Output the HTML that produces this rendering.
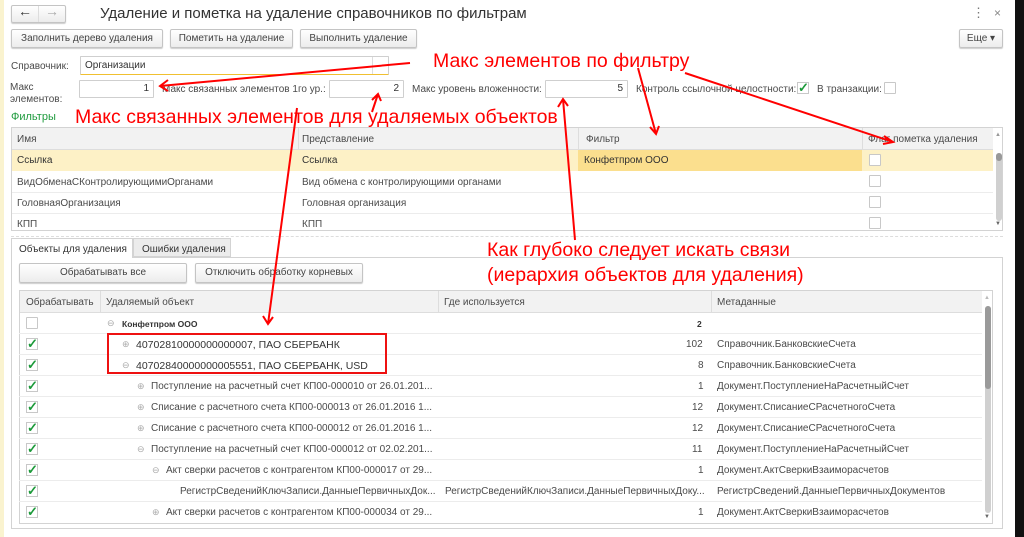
<!DOCTYPE html>
<html><head><meta charset="utf-8"><style>
*{box-sizing:border-box;margin:0;padding:0}
body{width:1024px;height:537px;position:relative;overflow:hidden;background:#fff;font-family:"Liberation Sans",Arial,sans-serif;font-size:10px;color:#4a4a4a}
.a{position:absolute;white-space:nowrap}
.btn{position:absolute;border:1px solid #c4c4c4;border-radius:2px;background:linear-gradient(#fff,#ececec);box-shadow:0 1px 1px rgba(0,0,0,.2);text-align:center;color:#444;font-size:10px}
.inp{position:absolute;border:1px solid #cfcfcf;background:#fff;border-radius:1px;text-align:right;padding-right:4px;color:#333}
.cb{position:absolute;width:12px;height:12px;border:1px solid #c8c8c8;background:#fff;border-radius:1px}
.chk{position:absolute;width:12px;height:12px;border:1px solid #c8c8c8;background:#fff;color:#1c9a3a;font-size:13px;font-weight:bold;line-height:10px;text-align:center;overflow:visible}
.red{position:absolute;color:#ff0000;font-size:19.5px;white-space:nowrap;font-family:"Liberation Sans",sans-serif}
.tr{position:absolute;left:19px;width:963px;height:21px;border-bottom:1px solid #ececec}
.tr span{position:absolute;top:5px;white-space:nowrap}
.tr .chk{top:4px;left:7px}
.pm{color:#aaa;font-size:9px}
</style></head><body>
<div class="a" style="left:0;top:0;width:4px;height:537px;background:#faf3cf"></div>
<div class="a" style="left:1015px;top:0;width:9px;height:537px;background:#111"></div>

<div class="btn" style="left:11px;top:5px;width:55px;height:18px"></div>
<div class="a" style="left:38px;top:6px;width:1px;height:16px;background:#ddd"></div>
<div class="a" style="left:18px;top:3px;font-size:14px;color:#333;font-weight:bold">&#8592;</div>
<div class="a" style="left:45px;top:3px;font-size:14px;color:#aaa">&#8594;</div>
<div class="a" style="left:100px;top:5px;font-size:15px;color:#333">Удаление и пометка на удаление справочников по фильтрам</div>
<div class="a" style="left:972px;top:5px;font-size:13px;color:#777">&#8942;</div>
<div class="a" style="left:994px;top:6px;font-size:12px;color:#888">×</div>

<div class="btn" style="left:11px;top:29px;width:152px;height:19px;line-height:17px">Заполнить дерево удаления</div>
<div class="btn" style="left:170px;top:29px;width:123px;height:19px;line-height:17px">Пометить на удаление</div>
<div class="btn" style="left:300px;top:29px;width:117px;height:19px;line-height:17px">Выполнить удаление</div>
<div class="btn" style="left:959px;top:29px;width:44px;height:19px;line-height:17px">Еще ▾</div>

<div class="a" style="left:11px;top:61px">Справочник:</div>
<div class="inp" style="left:80px;top:56px;width:309px;height:19px;border-bottom:1px solid #f0c030;text-align:left;padding-left:4px;line-height:17px">Организации</div>
<div class="a" style="left:372px;top:57px;width:1px;height:17px;background:#ddd"></div>

<div class="a" style="left:10px;top:82px;line-height:12px">Макс<br>элементов:</div>
<div class="inp" style="left:79px;top:80px;width:75px;height:18px;line-height:16px">1</div>
<div class="a" style="left:162px;top:84px">Макс связанных элементов 1го ур.:</div>
<div class="inp" style="left:329px;top:80px;width:75px;height:18px;line-height:16px">2</div>
<div class="a" style="left:412px;top:84px">Макс уровень вложенности:</div>
<div class="inp" style="left:545px;top:80px;width:83px;height:18px;line-height:16px">5</div>
<div class="a" style="left:636px;top:84px">Контроль ссылочной целостности:</div>
<div class="chk" style="left:797px;top:82px">✓</div>
<div class="a" style="left:817px;top:84px">В транзакции:</div>
<div class="cb" style="left:884px;top:82px"></div>

<div class="a" style="left:11px;top:111px;color:#1f9b3e;font-size:11px">Фильтры</div>
<div class="a" style="left:11px;top:127px;width:992px;height:104px;border:1px solid #d3d3d3;overflow:hidden">
 <div class="a" style="left:0;top:0;width:981px;height:22px;background:#f2f2f2;border-bottom:1px solid #ddd"></div>
 <div class="a" style="left:286px;top:0;width:1px;height:22px;background:#ddd"></div>
 <div class="a" style="left:566px;top:0;width:1px;height:22px;background:#ddd"></div>
 <div class="a" style="left:850px;top:0;width:1px;height:22px;background:#ddd"></div>
 <div class="a" style="left:5px;top:6px">Имя</div>
 <div class="a" style="left:290px;top:6px">Представление</div>
 <div class="a" style="left:574px;top:6px">Фильтр</div>
 <div class="a" style="left:856px;top:6px">Флаг пометка удаления</div>
 <div class="a" style="left:0;top:22px;width:981px;height:21px;background:#fdf1c6"></div>
 <div class="a" style="left:566px;top:22px;width:284px;height:21px;background:#fbdf8e"></div>
 <div class="a" style="left:5px;top:27px;color:#333">Ссылка</div><div class="a" style="left:290px;top:27px;color:#333">Ссылка</div><div class="a" style="left:572px;top:27px;color:#333">Конфетпром ООО</div>
 <div class="a" style="left:0;top:64px;width:981px;height:1px;background:#ececec"></div>
 <div class="a" style="left:5px;top:49px">ВидОбменаСКонтролирующимиОрганами</div><div class="a" style="left:290px;top:49px">Вид обмена с контролирующими органами</div>
 <div class="a" style="left:0;top:85px;width:981px;height:1px;background:#ececec"></div>
 <div class="a" style="left:5px;top:70px">ГоловнаяОрганизация</div><div class="a" style="left:290px;top:70px">Головная организация</div>
 <div class="a" style="left:5px;top:91px">КПП</div><div class="a" style="left:290px;top:91px">КПП</div>
 <div class="cb" style="left:857px;top:26px"></div><div class="cb" style="left:857px;top:47px"></div><div class="cb" style="left:857px;top:68px"></div><div class="cb" style="left:857px;top:89px"></div>
 <div class="a" style="left:983px;top:4px;font-size:6px;color:#999">▲</div>
 <div class="a" style="left:984px;top:25px;width:6px;height:68px;background:#d0d0d0;border-radius:3px"></div>
 <div class="a" style="left:984px;top:25px;width:6px;height:8px;background:#999;border-radius:3px"></div>
 <div class="a" style="left:983px;top:93px;font-size:6px;color:#666">▼</div>
</div>
<div class="a" style="left:11px;top:236px;width:992px;border-top:1px dashed #ddd"></div>

<div class="a" style="left:11px;top:238px;width:122px;height:20px;border:1px solid #d3d3d3;border-bottom:none;background:#fff;padding:5px 0 0 7px;color:#333;z-index:2">Объекты для удаления</div>
<div class="a" style="left:133px;top:238px;width:98px;height:19px;border:1px solid #d3d3d3;background:#ececec;padding:5px 0 0 8px;color:#333">Ошибки удаления</div>
<div class="a" style="left:11px;top:257px;width:992px;height:272px;border:1px solid #d3d3d3"></div>
<div class="btn" style="left:19px;top:263px;width:168px;height:20px;line-height:18px">Обрабатывать все</div>
<div class="btn" style="left:195px;top:263px;width:168px;height:20px;line-height:18px">Отключить обработку корневых</div>

<div class="a" style="left:19px;top:290px;width:974px;height:234px;border:1px solid #d3d3d3"></div>
<div class="a" style="left:20px;top:291px;width:962px;height:22px;background:#f2f2f2;border-bottom:1px solid #ddd"></div>
<div class="a" style="left:100px;top:291px;width:1px;height:22px;background:#ddd"></div>
<div class="a" style="left:438px;top:291px;width:1px;height:22px;background:#ddd"></div>
<div class="a" style="left:711px;top:291px;width:1px;height:22px;background:#ddd"></div>
<div class="a" style="left:26px;top:297px">Обрабатывать</div>
<div class="a" style="left:106px;top:297px">Удаляемый объект</div>
<div class="a" style="left:444px;top:297px">Где используется</div>
<div class="a" style="left:717px;top:297px">Метаданные</div>
<div class="a" style="left:984px;top:295px;font-size:6px;color:#bbb">▲</div>
<div class="a" style="left:985px;top:306px;width:6px;height:207px;background:#d0d0d0;border-radius:3px"></div>
<div class="a" style="left:985px;top:306px;width:6px;height:83px;background:#9a9a9a;border-radius:3px"></div>
<div class="a" style="left:984px;top:514px;font-size:6px;color:#666">▼</div>

<div class="tr" style="top:313px"><div class="cb" style="left:7px;top:4px"></div><span class="pm" style="left:88px">⊖</span><span style="left:103px;font-weight:bold;font-size:8.5px;color:#333;top:6px">Конфетпром ООО</span><span style="left:678px;font-weight:bold;font-size:8.5px;color:#333;top:6px">2</span></div>
<div class="tr" style="top:334px"><span class="chk">✓</span><span class="pm" style="left:103px">⊕</span><span style="left:117px;font-size:10.5px;color:#333">40702810000000000007, ПАО СБЕРБАНК</span><span style="left:667px">102</span><span style="left:698px">Справочник.БанковскиеСчета</span></div>
<div class="tr" style="top:355px"><span class="chk">✓</span><span class="pm" style="left:103px">⊖</span><span style="left:117px;font-size:10.5px;color:#333">40702840000000005551, ПАО СБЕРБАНК, USD</span><span style="left:679px">8</span><span style="left:698px">Справочник.БанковскиеСчета</span></div>
<div class="tr" style="top:376px"><span class="chk">✓</span><span class="pm" style="left:118px">⊕</span><span style="left:132px">Поступление на расчетный счет КП00-000010 от 26.01.201...</span><span style="left:679px">1</span><span style="left:698px">Документ.ПоступлениеНаРасчетныйСчет</span></div>
<div class="tr" style="top:397px"><span class="chk">✓</span><span class="pm" style="left:118px">⊕</span><span style="left:132px">Списание с расчетного счета КП00-000013 от 26.01.2016 1...</span><span style="left:673px">12</span><span style="left:698px">Документ.СписаниеСРасчетногоСчета</span></div>
<div class="tr" style="top:418px"><span class="chk">✓</span><span class="pm" style="left:118px">⊕</span><span style="left:132px">Списание с расчетного счета КП00-000012 от 26.01.2016 1...</span><span style="left:673px">12</span><span style="left:698px">Документ.СписаниеСРасчетногоСчета</span></div>
<div class="tr" style="top:439px"><span class="chk">✓</span><span class="pm" style="left:118px">⊖</span><span style="left:132px">Поступление на расчетный счет КП00-000012 от 02.02.201...</span><span style="left:673px">11</span><span style="left:698px">Документ.ПоступлениеНаРасчетныйСчет</span></div>
<div class="tr" style="top:460px"><span class="chk">✓</span><span class="pm" style="left:133px">⊖</span><span style="left:147px">Акт сверки расчетов с контрагентом КП00-000017 от 29...</span><span style="left:679px">1</span><span style="left:698px">Документ.АктСверкиВзаиморасчетов</span></div>
<div class="tr" style="top:481px"><span class="chk">✓</span><span style="left:161px">РегистрСведенийКлючЗаписи.ДанныеПервичныхДок...</span><span style="left:426px">РегистрСведенийКлючЗаписи.ДанныеПервичныхДоку...</span><span style="left:698px">РегистрСведений.ДанныеПервичныхДокументов</span></div>
<div class="tr" style="top:502px;border:none"><span class="chk">✓</span><span class="pm" style="left:133px">⊕</span><span style="left:147px">Акт сверки расчетов с контрагентом КП00-000034 от 29...</span><span style="left:679px">1</span><span style="left:698px">Документ.АктСверкиВзаиморасчетов</span></div>

<div class="red" style="left:433px;top:50px">Макс элементов по фильтру</div>
<div class="red" style="left:75px;top:106px">Макс связанных элементов для удаляемых объектов</div>
<div class="red" style="left:487px;top:239px">Как глубоко следует искать связи</div>
<div class="red" style="left:487px;top:264px">(иерархия объектов для удаления)</div>
<div class="a" style="left:107px;top:333px;width:280px;height:41px;border:2px solid #ee1111"></div>
<svg class="a" style="left:0;top:0" width="1024" height="537" viewBox="0 0 1024 537">
<g stroke="#f00" stroke-width="2" fill="none">
<path d="M410 63 L160 86 M168 80 L160 86 L168 91"/>
<path d="M372 112 L378 94 M372 100 L378 94 L381 101"/>
<path d="M297 108 L268 324 M263 316 L268 324 L273 317"/>
<path d="M575 240 L563 99 M558 107 L563 99 L568 106"/>
<path d="M638 68 L656 134 M650 127 L656 134 L659 126"/>
<path d="M685 73 L893 142 M884 136 L893 142 L883 144"/>
</g></svg>
</body></html>
